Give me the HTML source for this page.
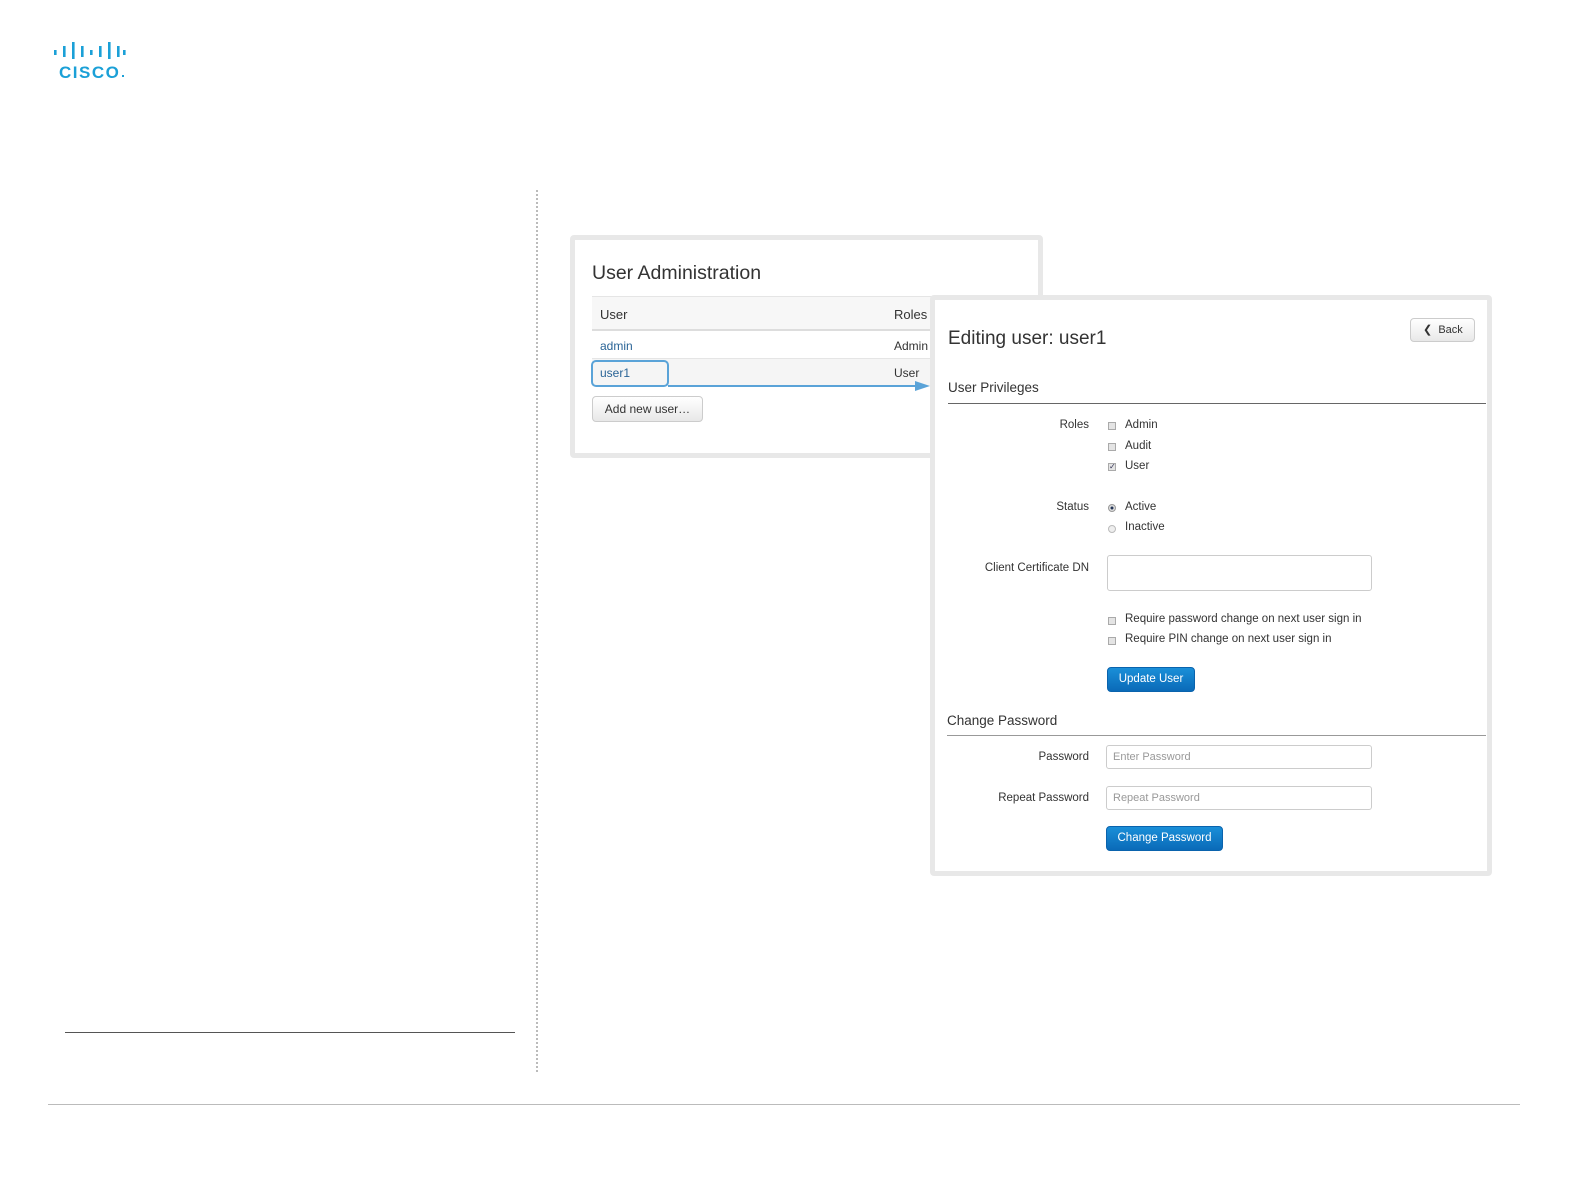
<!DOCTYPE html>
<html><head><meta charset="utf-8"><style>
*{margin:0;padding:0;box-sizing:border-box}
body{width:1584px;height:1191px;background:#fff;position:relative;font-family:"Liberation Sans",Arial,sans-serif;color:#333;overflow:hidden}
.a{position:absolute}
.panel{position:absolute;background:#fff;border:5px solid #e8e8e8;border-radius:4px}
.lbl{position:absolute;font-size:11.5px;color:#333;text-align:right;width:150px}
.cb{position:absolute;width:8px;height:8px;border:1px solid #aaa;background:#e4e4e4}
.t11{position:absolute;font-size:11.5px;color:#333}
.btn{position:absolute;background:linear-gradient(#1a8fd8,#0a6ab8);border:1px solid #0a63ad;border-radius:4px;color:#fff;font-size:11.5px;text-align:center}
.inp{position:absolute;border:1px solid #ccc;border-radius:3px;background:#fff;font-size:11px;color:#999;padding:5px 6px}
</style></head><body>
<svg class="a" style="left:52px;top:42px" width="76" height="40">
<g fill="#1ba0d7">
<rect x="2" y="8" width="2.6" height="5"/><rect x="11" y="4" width="2.6" height="11"/><rect x="20" y="0" width="2.6" height="17"/><rect x="29" y="4" width="2.6" height="11"/><rect x="38" y="8" width="2.6" height="5"/><rect x="47" y="4" width="2.6" height="11"/><rect x="56" y="0" width="2.6" height="17"/><rect x="65" y="4" width="2.6" height="11"/><rect x="71" y="8" width="2.6" height="5"/>
</g>
<text x="7" y="36" font-family="Liberation Sans" font-weight="bold" font-size="17" fill="#1ba0d7" letter-spacing="1.5">CISCO</text>
<rect x="70" y="33" width="2" height="2" fill="#1ba0d7"/>
</svg>
<div class="a" style="left:536px;top:190px;height:882px;border-left:2px dotted #bbb"></div>
<div class="a" style="left:65px;top:1032px;width:450px;border-top:1px solid #555"></div>
<div class="a" style="left:48px;top:1104px;width:1472px;border-top:1px solid #bbb"></div>

<div class="panel" style="left:570px;top:235px;width:473px;height:223px"></div>
<div class="a" style="left:592px;top:262px;font-size:19.5px;color:#333">User Administration</div>
<div class="a" style="left:592px;top:296px;width:340px;height:35px;background:#f7f7f7;border-top:1px solid #e5e5e5;border-bottom:2px solid #ddd"></div>
<div class="a" style="left:600px;top:307px;font-size:13px">User</div>
<div class="a" style="left:894px;top:307px;font-size:13px">Roles</div>
<div class="a" style="left:600px;top:339px;font-size:12px;color:#2a6496">admin</div>
<div class="a" style="left:894px;top:339px;font-size:12px">Admin</div>
<div class="a" style="left:592px;top:358px;width:340px;height:28px;background:#f5f5f5;border-top:1px solid #e5e5e5"></div>
<div class="a" style="left:591px;top:360px;width:78px;height:27px;border:2px solid #5aa3d8;border-radius:5px"></div>
<div class="a" style="left:600px;top:366px;font-size:12px;color:#2a6496">user1</div>
<div class="a" style="left:894px;top:366px;font-size:12px">User</div>
<div class="a" style="left:668px;top:385px;width:250px;border-top:2px solid #5aa3d8"></div>
<svg class="a" style="left:915px;top:380px" width="16" height="12"><polygon points="0,1 15,6 0,11" fill="#5aa3d8"/></svg>
<div class="a" style="left:592px;top:396px;width:111px;height:26px;border:1px solid #ccc;border-radius:4px;background:linear-gradient(#fff,#e8e8e8);font-size:12px;text-align:center;line-height:24px">Add new user…</div>

<div class="panel" style="left:930px;top:295px;width:562px;height:581px"></div>
<div class="a" style="left:948px;top:328px;font-size:19px">Editing user: user1</div>
<div class="a" style="left:1410px;top:318px;width:65px;height:24px;border:1px solid #ccc;border-radius:4px;background:linear-gradient(#fff,#e8e8e8);font-size:11px;line-height:22px;padding-left:12px">&#10094;&nbsp; Back</div>
<div class="a" style="left:948px;top:380px;font-size:13.5px">User Privileges</div>
<div class="a" style="left:948px;top:403px;width:538px;border-top:1px solid #666"></div>
<div class="lbl" style="left:939px;top:419px">Roles</div>
<div class="cb" style="left:1108px;top:422px"></div><div class="t11" style="left:1125px;top:419px">Admin</div>
<div class="cb" style="left:1108px;top:443px"></div><div class="t11" style="left:1125px;top:440px">Audit</div>
<div class="cb" style="left:1108px;top:463px;font-size:8px;line-height:6px;color:#335">✓</div><div class="t11" style="left:1125px;top:460px">User</div>
<div class="lbl" style="left:939px;top:501px">Status</div>
<div class="a" style="left:1108px;top:504px;width:8px;height:8px;border-radius:50%;border:1px solid #999;background:radial-gradient(#235 30%,#ddd 40%)"></div><div class="t11" style="left:1125px;top:501px">Active</div>
<div class="a" style="left:1108px;top:525px;width:8px;height:8px;border-radius:50%;border:1px solid #bbb;background:#eee"></div><div class="t11" style="left:1125px;top:521px">Inactive</div>
<div class="lbl" style="left:939px;top:562px">Client Certificate DN</div>
<div class="inp" style="left:1107px;top:555px;width:265px;height:36px"></div>
<div class="cb" style="left:1108px;top:617px"></div><div class="t11" style="left:1125px;top:613px">Require password change on next user sign in</div>
<div class="cb" style="left:1108px;top:637px"></div><div class="t11" style="left:1125px;top:633px">Require PIN change on next user sign in</div>
<div class="btn" style="left:1107px;top:667px;width:88px;height:25px;line-height:23px">Update User</div>
<div class="a" style="left:947px;top:713px;font-size:13.5px">Change Password</div>
<div class="a" style="left:947px;top:735px;width:539px;border-top:1px solid #999"></div>
<div class="lbl" style="left:939px;top:751px">Password</div>
<div class="inp" style="left:1106px;top:745px;width:266px;height:24px">Enter Password</div>
<div class="lbl" style="left:939px;top:792px">Repeat Password</div>
<div class="inp" style="left:1106px;top:786px;width:266px;height:24px">Repeat Password</div>
<div class="btn" style="left:1106px;top:826px;width:117px;height:25px;line-height:23px">Change Password</div>
</body></html>
